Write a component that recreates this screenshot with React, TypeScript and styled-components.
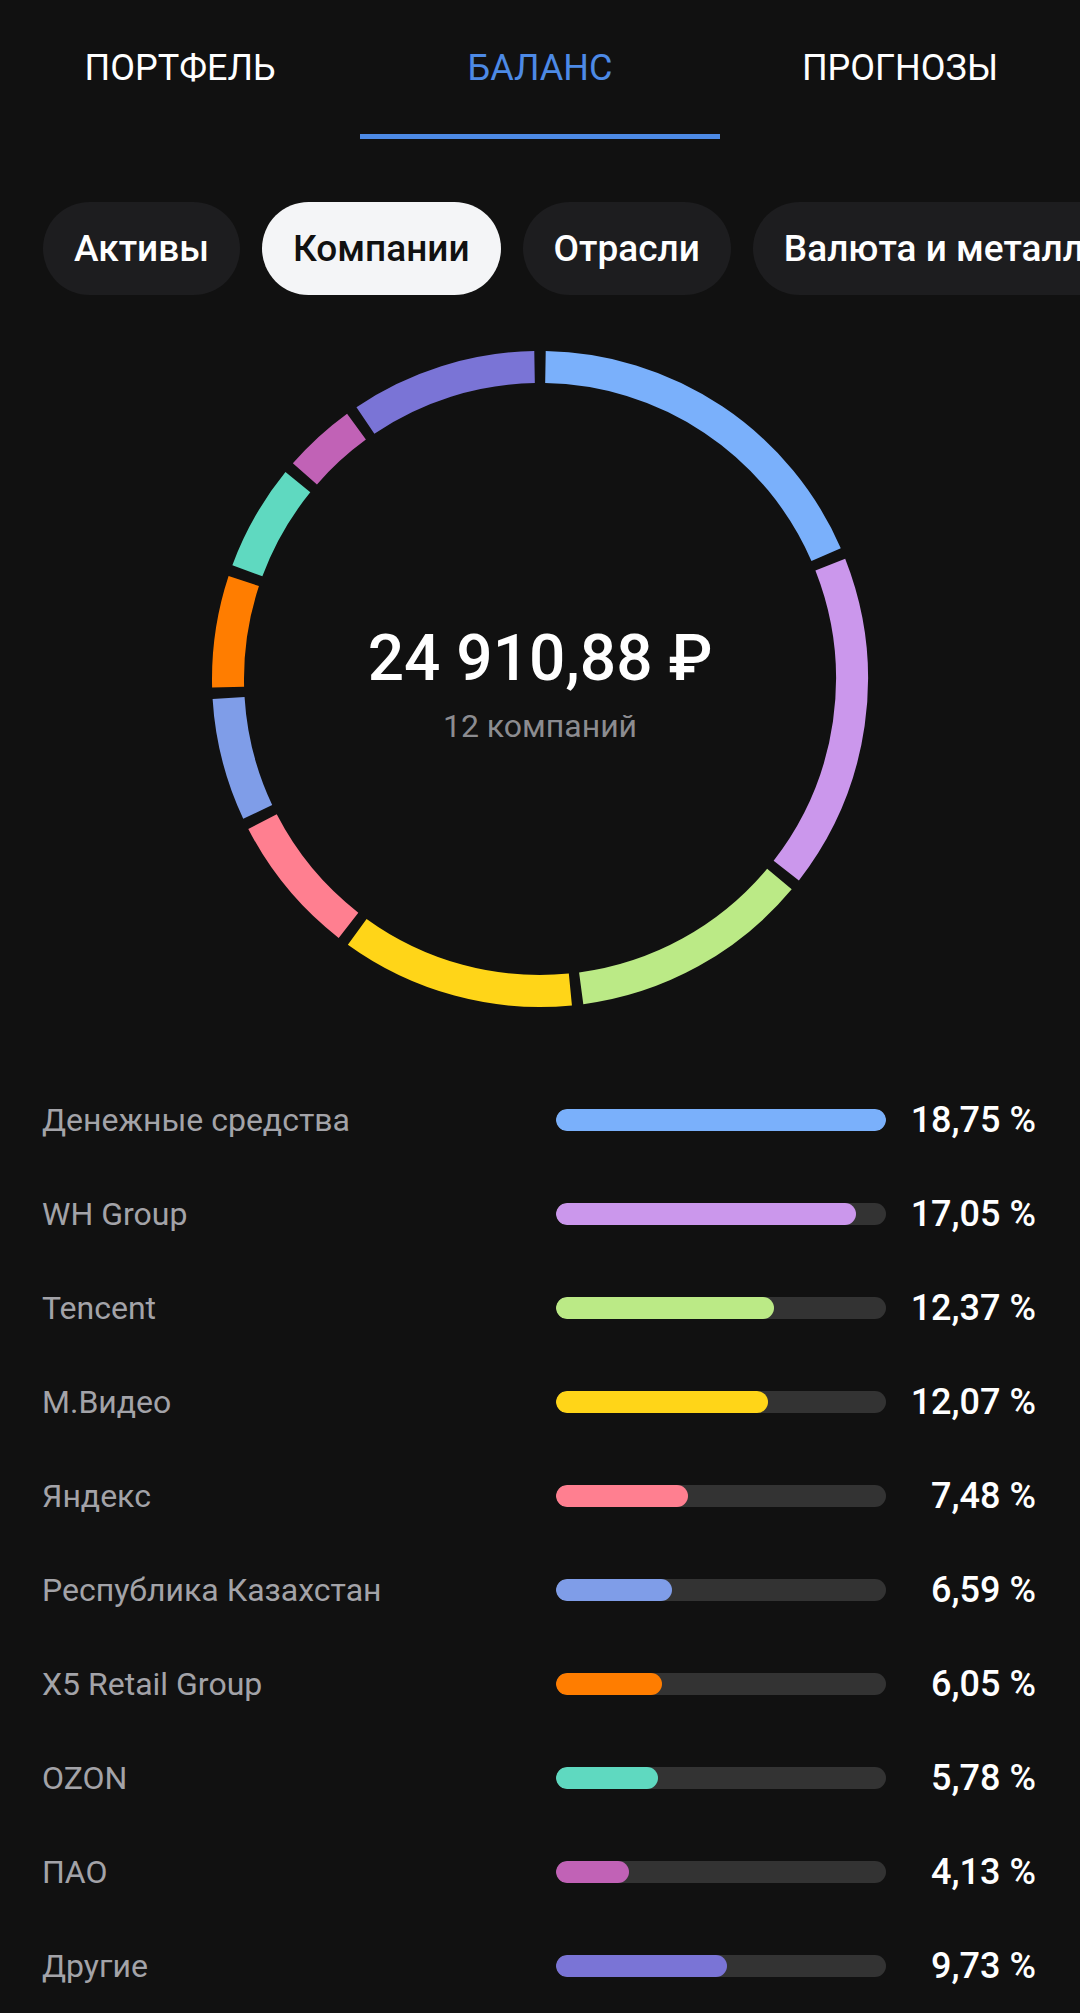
import React from "react";
import styled, { createGlobalStyle } from "styled-components";

const GlobalStyle = createGlobalStyle`
  body {
    margin: 0;
    background: #111111;
    font-family: Roboto, "Noto Sans", sans-serif;
  }
`;

const items = [
  { name: "Денежные средства", value: 18.75, color: "#7ab0fb" },
  { name: "WH Group", value: 17.05, color: "#cb97ec" },
  { name: "Tencent", value: 12.37, color: "#bbea86" },
  { name: "М.Видео", value: 12.07, color: "#ffd518" },
  { name: "Яндекс", value: 7.48, color: "#ff7f90" },
  { name: "Республика Казахстан", value: 6.59, color: "#7f9de8" },
  { name: "X5 Retail Group", value: 6.05, color: "#ff7d00" },
  { name: "OZON", value: 5.78, color: "#5fd9c0" },
  { name: "ПАО", value: 4.13, color: "#c162b6" },
  { name: "Другие", value: 9.73, color: "#7a74d6" },
];

const chips = ["Активы", "Компании", "Отрасли", "Валюта и металлы"];

const fmt = (v: number) => v.toFixed(2).replace(".", ",") + " %";

const Donut = () => {
  const cx = 330;
  const cy = 330;
  const r = 312;
  const gapDeg = 2;
  let start = 0;
  const arcs = items.map((it) => {
    const sweep = (it.value / 100) * 360;
    const a0 = start + gapDeg / 2;
    const a1 = start + sweep - gapDeg / 2;
    start += sweep;
    const p = (a: number) => {
      const rad = ((a - 90) * Math.PI) / 180;
      return [cx + r * Math.cos(rad), cy + r * Math.sin(rad)];
    };
    const [x0, y0] = p(a0);
    const [x1, y1] = p(a1);
    const large = a1 - a0 > 180 ? 1 : 0;
    return (
      <path
        key={it.name}
        d={`M ${x0} ${y0} A ${r} ${r} 0 ${large} 1 ${x1} ${y1}`}
        stroke={it.color}
        strokeWidth={32}
        fill="none"
      />
    );
  });
  return (
    <svg width="660" height="660" viewBox="0 0 660 660">
      {arcs}
    </svg>
  );
};

export default function App() {
  const max = Math.max(...items.map((i) => i.value));
  return (
    <Page>
      <GlobalStyle />
      <Tabs>
        <Tab>ПОРТФЕЛЬ</Tab>
        <Tab $active>БАЛАНС</Tab>
        <Tab>ПРОГНОЗЫ</Tab>
      </Tabs>
      <ChipRow>
        {chips.map((c, i) => (
          <Chip key={c} $selected={i === 1}>
            {c}
          </Chip>
        ))}
      </ChipRow>
      <ChartWrap>
        <Donut />
        <Center>
          <Total>24 910,88 ₽</Total>
          <Count>12 компаний</Count>
        </Center>
      </ChartWrap>
      <List>
        {items.map((it) => (
          <Row key={it.name}>
            <Label>{it.name}</Label>
            <Track>
              <Fill $color={it.color} style={{ width: `${(it.value / max) * 100}%` }} />
            </Track>
            <Percent>{fmt(it.value)}</Percent>
          </Row>
        ))}
      </List>
    </Page>
  );
}

const Page = styled.div`
  width: 1080px;
  min-height: 2013px;
  background: #111111;
  overflow: hidden;
`;

const Tabs = styled.div`
  display: grid;
  grid-template-columns: repeat(3, 1fr);
  height: 139px;
`;

const Tab = styled.div<{ $active?: boolean }>`
  display: flex;
  justify-content: center;
  padding-top: 47px;
  box-sizing: border-box;
  font-size: 36px;
  font-weight: 400;
  color: ${({ $active }) => ($active ? "#4d8ae6" : "#ffffff")};
  border-bottom: 5px solid ${({ $active }) => ($active ? "#4d8ae6" : "transparent")};
`;

const ChipRow = styled.div`
  display: flex;
  gap: 22px;
  padding: 63px 0 0 43px;
  white-space: nowrap;
`;

const Chip = styled.div<{ $selected?: boolean }>`
  flex: none;
  height: 93px;
  padding: 0 31px;
  border-radius: 47px;
  display: flex;
  align-items: center;
  font-size: 37px;
  font-weight: 500;
  background: ${({ $selected }) => ($selected ? "#f4f5f7" : "#1d1d1f")};
  color: ${({ $selected }) => ($selected ? "#111111" : "#ffffff")};
`;

const ChartWrap = styled.div`
  position: relative;
  width: 660px;
  height: 660px;
  margin: 54px auto 0;
`;

const Center = styled.div`
  position: absolute;
  inset: 0;
  display: flex;
  flex-direction: column;
  align-items: center;
  justify-content: center;
  padding-top: 14px;
`;

const Total = styled.div`
  font-size: 64px;
  font-weight: 500;
  color: #ffffff;
  line-height: 1;
`;

const Count = styled.div`
  margin-top: 16px;
  font-size: 32px;
  color: #8c8c90;
`;

const List = styled.div`
  display: flex;
  flex-direction: column;
  padding: 64px 44px 0 42px;
`;

const Row = styled.div`
  display: grid;
  grid-template-columns: 514px 330px 1fr;
  align-items: center;
  height: 94px;
`;

const Label = styled.div`
  font-size: 32px;
  color: #a3a3a8;
`;

const Track = styled.div`
  height: 22px;
  border-radius: 11px;
  background: #333333;
  overflow: hidden;
`;

const Fill = styled.div<{ $color: string }>`
  height: 100%;
  border-radius: 11px;
  background: ${({ $color }) => $color};
`;

const Percent = styled.div`
  text-align: right;
  font-size: 36px;
  font-weight: 500;
  color: #ffffff;
`;
